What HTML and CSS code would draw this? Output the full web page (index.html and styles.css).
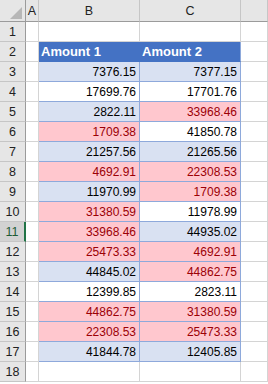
FILE: index.html
```html
<!DOCTYPE html>
<html>
<head>
<meta charset="utf-8">
<link rel="stylesheet" href="styles.css">
</head>
<body>
<div class="sheet">
  <div class="row hdr">
    <div class="c rh corner"><span class="tri"></span></div>
    <div class="c ca ch">A</div>
    <div class="c cb ch">B</div>
    <div class="c cc ch">C</div>
    <div class="c cd ch"></div>
  </div>
  <div class="row"><div class="c rh">1</div><div class="c ca"></div><div class="c cb"></div><div class="c cc"></div><div class="c cd"></div></div>
  <div class="row"><div class="c rh">2</div><div class="c ca"></div><div class="c cb th">Amount 1</div><div class="c cc th">Amount 2</div><div class="c cd"></div></div>
  <div class="row"><div class="c rh">3</div><div class="c ca"></div><div class="c cb t band">7376.15</div><div class="c cc t band">7377.15</div><div class="c cd"></div></div>
  <div class="row"><div class="c rh">4</div><div class="c ca"></div><div class="c cb t">17699.76</div><div class="c cc t">17701.76</div><div class="c cd"></div></div>
  <div class="row"><div class="c rh">5</div><div class="c ca"></div><div class="c cb t band">2822.11</div><div class="c cc t bad">33968.46</div><div class="c cd"></div></div>
  <div class="row"><div class="c rh">6</div><div class="c ca"></div><div class="c cb t bad">1709.38</div><div class="c cc t">41850.78</div><div class="c cd"></div></div>
  <div class="row"><div class="c rh">7</div><div class="c ca"></div><div class="c cb t band">21257.56</div><div class="c cc t band">21265.56</div><div class="c cd"></div></div>
  <div class="row"><div class="c rh">8</div><div class="c ca"></div><div class="c cb t bad">4692.91</div><div class="c cc t bad">22308.53</div><div class="c cd"></div></div>
  <div class="row"><div class="c rh">9</div><div class="c ca"></div><div class="c cb t band">11970.99</div><div class="c cc t bad">1709.38</div><div class="c cd"></div></div>
  <div class="row"><div class="c rh">10</div><div class="c ca"></div><div class="c cb t bad">31380.59</div><div class="c cc t">11978.99</div><div class="c cd"></div></div>
  <div class="row"><div class="c rh sel">11</div><div class="c ca"></div><div class="c cb t bad">33968.46</div><div class="c cc t band">44935.02</div><div class="c cd"></div></div>
  <div class="row"><div class="c rh">12</div><div class="c ca"></div><div class="c cb t bad">25473.33</div><div class="c cc t bad">4692.91</div><div class="c cd"></div></div>
  <div class="row"><div class="c rh">13</div><div class="c ca"></div><div class="c cb t band">44845.02</div><div class="c cc t bad">44862.75</div><div class="c cd"></div></div>
  <div class="row"><div class="c rh">14</div><div class="c ca"></div><div class="c cb t">12399.85</div><div class="c cc t">2823.11</div><div class="c cd"></div></div>
  <div class="row"><div class="c rh">15</div><div class="c ca"></div><div class="c cb t bad">44862.75</div><div class="c cc t bad">31380.59</div><div class="c cd"></div></div>
  <div class="row"><div class="c rh">16</div><div class="c ca"></div><div class="c cb t bad">22308.53</div><div class="c cc t bad">25473.33</div><div class="c cd"></div></div>
  <div class="row"><div class="c rh">17</div><div class="c ca"></div><div class="c cb t band">41844.78</div><div class="c cc t band">12405.85</div><div class="c cd"></div></div>
  <div class="row"><div class="c rh">18</div><div class="c ca"></div><div class="c cb"></div><div class="c cc"></div><div class="c cd"></div></div>
</div>
</body>
</html>
```
FILE: styles.css
```css
* { box-sizing: border-box; }
html, body { margin: 0; padding: 0; background: #ffffff; }
body { font-family: "Liberation Sans", Arial, sans-serif; font-size: 12px; color: #000; }
.sheet { width: 268px; height: 384px; overflow: hidden; }
.row { display: flex; height: 20px; }
.row.hdr { height: 22px; }
.c {
  flex: none;
  height: 100%;
  border-right: 1px solid #d4d4d4;
  border-bottom: 1px solid #d4d4d4;
  display: flex;
  align-items: center;
  white-space: nowrap;
  overflow: hidden;
}
.rh {
  width: 26px;
  background: #e6e6e6;
  border-right-color: #9b9b9b;
  border-bottom-color: #c6c6c6;
  justify-content: center;
  color: #222;
  font-size: 12.5px;
}
.rh.sel {
  background: #d2d2d2;
  border-right: 2px solid #217346;
  color: #1e5c36;
}
.ca { width: 13px; }
.cb { width: 101px; }
.cc { width: 101px; }
.cd { flex: 1; }
.ch {
  background: #e6e6e6;
  border-right-color: #c6c6c6;
  border-bottom-color: #9b9b9b;
  justify-content: center;
  color: #222;
  font-size: 12.5px;
}
.corner {
  position: relative;
  border-bottom-color: #9b9b9b;
}
.tri {
  position: absolute;
  right: 3px;
  bottom: 2px;
  width: 0;
  height: 0;
  border-left: 12px solid transparent;
  border-bottom: 12px solid #b7b7b7;
}
.th {
  background: #4472c4;
  color: #fff;
  font-weight: bold;
  font-size: 13px;
  padding-left: 2px;
  border-right-color: #4472c4;
  border-bottom-color: #4472c4;
}
.cc.th { border-right-color: #8ea9db; }
.t {
  justify-content: flex-end;
  padding-right: 3px;
  border-right-color: #8ea9db;
  border-bottom-color: #8ea9db;
}
.band { background: #d9e1f2; }
.bad { background: #ffc7ce; color: #9c0006; }
```
